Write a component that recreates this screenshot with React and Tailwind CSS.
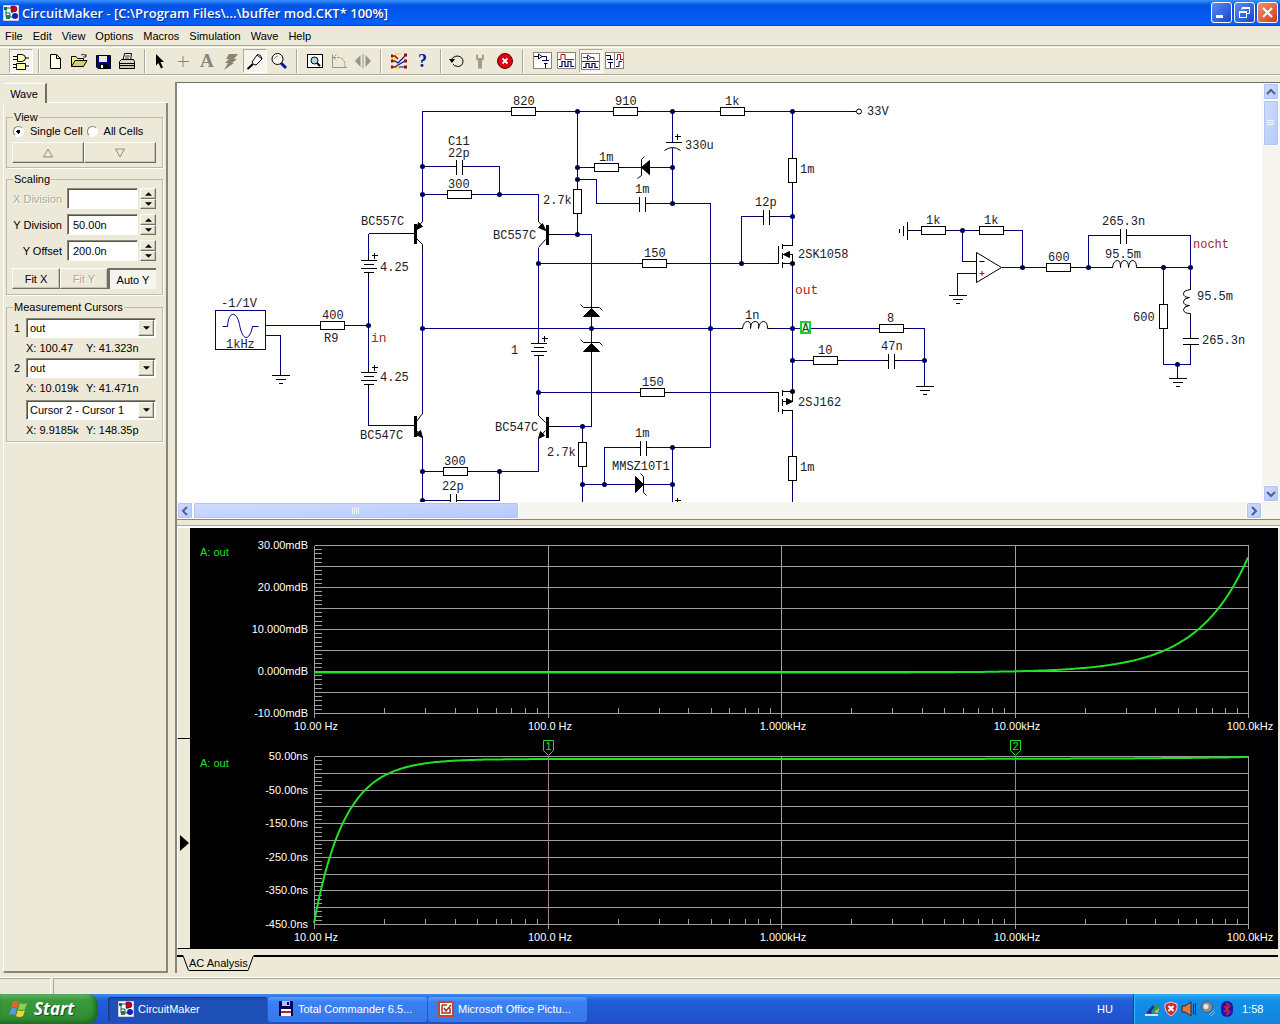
import { useState } from "react";

const WIRE = "#000080";

/* ---------- window chrome ---------- */

function AppIcon() {
  return (
    <svg width="16" height="16" viewBox="0 0 16 16" className="shrink-0">
      <rect width="16" height="16" fill="#fff" stroke="#b58cc0" />
      <path d="M1 3H9M3 3V12M3 8H7V12H13M9 3V8" stroke="#006060" fill="none" />
      <rect x="1" y="2" width="3" height="3" fill="#107040" />
      <path d="M8 1H11A2 2 0 0 1 11 7H8Z" fill="#c00030" stroke="#300" strokeWidth=".5" />
      <circle cx="12" cy="11" r="3" fill="#1020b0" />
      <rect x="3" y="10" width="4" height="4" fill="#208040" />
    </svg>
  );
}

function TitleBar() {
  return (
    <header className="flex h-[26px] items-center bg-linear-to-b from-[#3a93ff] via-[#0353e4] via-20% to-[#0560fb] border-b border-[#0344c0] pl-[3px] pr-[2px]">
      <AppIcon />
      <h1 className="ml-[3px] flex-1 whitespace-nowrap font-['Open_Sans',sans-serif] text-[13px] font-semibold leading-4 text-white [text-shadow:1px_1px_0_#0a2f8c]">
        CircuitMaker - [C:\Program Files\...\buffer mod.CKT* 100%]
      </h1>
      <div className="flex gap-[2px]">
        <button aria-label="Minimize" className="h-[21px] w-[21px] rounded-[3px] border border-white bg-linear-to-br from-[#5b8bf5] to-[#1546c8]">
          <svg width="19" height="19" viewBox="0 0 19 19"><path d="M4 13.500H11" stroke="#fff" strokeWidth="3" /></svg>
        </button>
        <button aria-label="Restore" className="h-[21px] w-[21px] rounded-[3px] border border-white bg-linear-to-br from-[#5b8bf5] to-[#1546c8]">
          <svg width="19" height="19" viewBox="0 0 19 19" fill="none" stroke="#fff">
            <path d="M7 7V4.500H14.500V10.500H12" />
            <path d="M7 5H15" strokeWidth="2" />
            <rect x="4.500" y="8.500" width="7" height="6" />
            <path d="M4 9H12" strokeWidth="2" />
          </svg>
        </button>
        <button aria-label="Close" className="h-[21px] w-[21px] rounded-[3px] border border-white bg-linear-to-br from-[#f09070] to-[#d03810]">
          <svg width="19" height="19" viewBox="0 0 19 19"><path d="M5 5L14 14M14 5L5 14" stroke="#fff" strokeWidth="2" /></svg>
        </button>
      </div>
    </header>
  );
}

function MenuBar() {
  const items = ["File", "Edit", "View", "Options", "Macros", "Simulation", "Wave", "Help"];
  return (
    <nav className="flex h-5 items-center gap-[10px] border-b border-[#aca899] pl-[5px]">
      {items.map((item) => (
        <button key={item} className="leading-4">{item}</button>
      ))}
    </nav>
  );
}

/* ---------- toolbar ---------- */

const icons = {
  gates: (
    <g fill="#ffffb0" stroke="#000">
      <path d="M2 5.500H6M2 8.500H6M14 7H18M2 13.500H6M2 16.500H6M14 15H18" />
      <path d="M6.500 3.500H11Q14.500 4 14.500 7Q14.500 10 11 10.500H6.500Z" />
      <path d="M5.500 12.500H14.500V18.500H5.500Z" />
    </g>
  ),
  new: <path d="M5.500 3.500H11.500L15.500 7.500V17.500H5.500ZM11.500 3.500V7.500H15.500" fill="#ffffe8" stroke="#000" />,
  open: (
    <g fill="#f8f080" stroke="#000">
      <path d="M2.500 15.500V5.500H7L8.500 7.500H14.500V10" />
      <path d="M2.500 15.500L6 9.500H18L14.500 15.500Z" fill="#d8d060" />
      <path d="M12 4Q15 2 17 5M17 3V6H14" fill="none" strokeWidth=".8" />
    </g>
  ),
  save: (
    <g>
      <path d="M3.500 4.500H17.500V17.500H5L3.500 16Z" fill="#000080" stroke="#000" />
      <rect x="6" y="5" width="8" height="6" fill="#ece9d8" />
      <rect x="7" y="13" width="8" height="4" fill="#000" />
      <rect x="8" y="14" width="2" height="3" fill="#fff" />
    </g>
  ),
  print: (
    <g fill="#fff" stroke="#000">
      <path d="M6 9.500L7.500 2.500H14.500L13.500 9.500Z" />
      <path d="M8 5H13M8 7H12" strokeWidth=".8" />
      <path d="M2.500 10.500L4.500 8.500H16.500L17.500 10.500V14.500H2.500Z" fill="#d8d4c0" />
      <path d="M2.500 14.500H17.500V17.500H2.500ZM3 12.500H17" fill="#c8c4b0" />
    </g>
  ),
  select: <path d="M7 3L15 11H11.500L14 16.500L12 17.500L9.500 12L7 14.500Z" />,
  wire: <path d="M10 5V16M5 10.500H16" stroke="#888575" fill="none" />,
  text: (
    <text x="3" y="16" fontSize="19" fontWeight="bold" fontFamily="Liberation Serif, serif" fill="#888575">A</text>
  ),
  bolt: <path d="M8 3H17L13 8H16L11 12H13L3 19L7 12H4L8 8H5Z" fill="#888575" />,
  probe: (
    <g fill="#fff" stroke="#000">
      <path d="M2.500 18L8 13" strokeWidth="2" />
      <path d="M7 11L12 4L17 8L11 14Q8 14 7 11Z" />
      <path d="M12 4Q15 2 17 8" fill="none" />
    </g>
  ),
  zoom: (
    <g fill="none">
      <path d="M12 12L17 17" stroke="#1010a0" strokeWidth="3" />
      <circle cx="8.500" cy="8" r="5.500" fill="#f6f6ea" stroke="#000" />
      <path d="M5.500 8Q6 5 9 5" stroke="#68a0a0" />
    </g>
  ),
  fit: (
    <g fill="#fff" stroke="#000">
      <rect x="2.500" y="3.500" width="15" height="13" />
      <path d="M12 12L15 15" strokeWidth="2" />
      <circle cx="9.500" cy="9.500" r="3.500" fill="#b0dada" />
    </g>
  ),
  rotate: (
    <g stroke="#98958a" fill="none">
      <path d="M3.500 3V16.500H18" />
      <path d="M4 6.500H10Q16 7 16 16M7.500 3.500L4.500 6.500L7.500 9.500" strokeDasharray="3 1" />
    </g>
  ),
  mirror: <path d="M7.500 4V16L2 10ZM12.500 4V16L18 10ZM9.500 3H10.500V17H9.500Z" fill="#98958a" />,
  run: (
    <g fill="none">
      <path d="M6 3H12M7 17H11M3 8H6" stroke="#f0e060" strokeWidth="2" />
      <path d="M3 5H6L9 8M3 10H6M3 16H6L9 14" stroke="#a00000" strokeWidth="1.500" />
      <path d="M6 10L9 12L16 5M9 14L16 10M10 16H16" stroke="#101090" strokeWidth="1.200" />
      <path d="M2 5H4M2 10H4M2 16H4M15 4H18M15 10H18M15 16H18" stroke="#901010" strokeWidth="3" />
    </g>
  ),
  help: <text x="5" y="16" fontSize="18" fontWeight="bold" fontFamily="Liberation Serif, serif" fill="#1010a8">?</text>,
  reset: (
    <g fill="none" stroke="#000">
      <path d="M4 9.500Q6 5 11 5Q16 6 16 10.500Q15.500 15.500 10.500 15.500Q7 15 6 13" />
      <path d="M2 8H8L5 12Z" fill="#000" stroke="none" />
    </g>
  ),
  wrench: <path d="M5 4L7 3V7H11V3L13 4V8L11 10V17L9 18L7 17V10L5 8Z" fill="#a09d8c" />,
  stop: (
    <g>
      <circle cx="10" cy="10" r="7.500" fill="#dc0010" stroke="#600" />
      <path d="M7.500 7.500L12.500 12.500M12.500 7.500L7.500 12.500" stroke="#fff" strokeWidth="1.800" />
    </g>
  ),
  viewCircuit: (
    <g fill="none" stroke="#000040">
      <rect x=".5" y="1.500" width="18" height="16" fill="#fff" stroke="#888575" />
      <path d="M1 5.500H6M9 5.500H13.500V9M5.500 3V8L9 5.500ZM9 9.500H16M11 12.500H14.500M12.500 13V17" />
    </g>
  ),
  viewWave: (
    <g fill="none">
      <rect x=".5" y="1.500" width="18" height="16" fill="#fff" stroke="#888575" />
      <path d="M1 8.500H4V3.500H8V8.500H17" stroke="#c00010" />
      <path d="M2 15.500H5V10.500H8V15.500H11V10.500H14V15.500H17" stroke="#000060" strokeWidth="1.200" />
    </g>
  ),
  viewSplitH: (
    <g fill="none">
      <rect x=".5" y="2.500" width="18" height="16" fill="#fff" stroke="#888575" />
      <path d="M2 6.500H6M10 6.500H13V9M6.500 4V9L10 6.500ZM1 10.500H18" stroke="#303050" />
      <path d="M2 16.500H5V12.500H8V16.500H11V12.500H14V16.500H17" stroke="#000060" strokeWidth="1.200" />
    </g>
  ),
  viewSplitV: (
    <g fill="none">
      <rect x=".5" y="1.500" width="18" height="16" fill="#fff" stroke="#888575" />
      <path d="M9.500 2V17" stroke="#888575" />
      <path d="M1 4.500H5.500V8M2 8.500H8M3 11.500H8M5.500 12V17" stroke="#000040" />
      <path d="M11 8.500H12.500V3.500H15.500V8.500H18" stroke="#c00010" />
      <path d="M11 15.500H14V10.500H17" stroke="#000060" />
    </g>
  ),
};

const toolGroups = [
  { id: "parts", space: "ml-[9px]", tools: ["gates"] },
  { id: "file", space: "ml-[3px]", tools: ["new", "open", "save", "print"] },
  { id: "edit", space: "ml-px", tools: ["select", "wire", "text", "bolt", "probe", "zoom"] },
  { id: "view", space: "ml-[5px]", tools: ["fit", "rotate", "mirror"] },
  { id: "sim", space: "ml-[5px]", tools: ["run", "help"] },
  { id: "control", space: "ml-[3px]", tools: ["reset", "wrench", "stop"] },
  { id: "windows", space: "ml-[7px]", tools: ["viewCircuit", "viewWave", "viewSplitH", "viewSplitV"] },
];
const pressed = ["gates", "probe", "viewSplitH"];

function Toolbar() {
  return (
    <div className="mt-px flex h-7 items-center border-t border-b border-t-white border-b-[#aca899] shadow-[0_1px_0_#fff]">
      {toolGroups.map((group, i) => (
        <div key={group.id} className="flex items-center">
          {i > 0 && <span className="ml-[5px] h-6 w-[2px] border-l border-r border-l-[#aca899] border-r-white" />}
          <div className={"flex " + group.space}>
            {group.tools.map((tool) => (
              <button
                key={tool}
                aria-label={tool}
                className={
                  "flex h-6 w-6 items-center justify-center " +
                  (pressed.includes(tool) ? "border border-[#aca899] border-b-white border-r-white bg-[#f6f4ec]" : "")
                }
              >
                <svg width="20" height="20" viewBox="0 0 20 20" className="shrink-0 overflow-visible">{icons[tool]}</svg>
              </button>
            ))}
          </div>
        </div>
      ))}
    </div>
  );
}

/* ---------- wave panel ---------- */

const raised = "border border-white border-b-[#716f64] border-r-[#716f64] shadow-[inset_-1px_-1px_0_#c5c2b0]";
const sunken = "border border-[#8a8778] border-b-white border-r-white bg-white shadow-[inset_1px_1px_0_#55534a]";

function Group({ title, className, children }) {
  return (
    <fieldset className={"min-w-0 border border-[#bdbaa8] pl-[5px] pr-[6px] shadow-[1px_1px_0_#fff] " + className}>
      <legend className="ml-px h-[14px] px-px leading-[14px]">{title}</legend>
      {children}
    </fieldset>
  );
}

function Triangle({ down, size = 7, hollow }) {
  return (
    <svg width={size} height={hollow ? 10 : 4} viewBox={hollow ? "0 0 12 10" : "0 0 8 4"} className="mx-auto">
      {hollow ? (
        <path d={down ? "M1.500 1H10.500L6 9Z" : "M1.500 9H10.500L6 1Z"} fill="none" stroke="#8f8c7c" />
      ) : (
        <path d={down ? "M0 0H8L4 4Z" : "M0 4H8L4 0Z"} />
      )}
    </svg>
  );
}

function Field({ id, label, value, disabled }) {
  return (
    <div className="mb-[5px] flex h-[21px] items-center">
      <label htmlFor={id} className={"w-[50px] whitespace-nowrap text-right " + (disabled ? "text-[#aca899] [text-shadow:1px_1px_0_#fff]" : "")}>
        {label}
      </label>
      <input id={id} defaultValue={value} disabled={disabled} className={"ml-[5px] h-[21px] w-0 flex-1 pl-[5px] " + sunken} />
      <div className="ml-[2px] flex w-4 flex-col">
        <button aria-label={label + " up"} className={"h-[11px] " + raised}><Triangle /></button>
        <button aria-label={label + " down"} className={"h-[10px] " + raised}><Triangle down /></button>
      </div>
    </div>
  );
}

function Picker({ id, label, options }) {
  return (
    <div className="flex h-5 items-center">
      <label htmlFor={id} className="w-[14px] pl-[2px]">{label}</label>
      <div className={"flex h-5 flex-1 p-px " + sunken}>
        <select id={id} aria-label={label || "Difference"} className="w-0 flex-1 appearance-none pl-[2px] outline-none">
          {options.map((o) => <option key={o}>{o}</option>)}
        </select>
        <span className={"flex w-4 items-center bg-[#ece9d8] " + raised}><Triangle down /></span>
      </div>
    </div>
  );
}

function Reading({ x, y }) {
  return (
    <div className="flex h-5 items-center pl-[14px]">
      <span className="w-[60px]">X: {x}</span>
      <span>Y: {y}</span>
    </div>
  );
}

function WavePanel() {
  const [cell, setCell] = useState("single");
  return (
    <aside className="flex w-[165px] shrink-0 flex-col">
      <div className="flex h-5">
        <button className="w-[44px] border-r-2 border-[#716f64] border-t border-t-white leading-4">Wave</button>
        <span className="flex-1 border-b border-white" />
      </div>
      <div className="flex-1 border-b-2 border-l border-r-2 border-b-[#8a8778] border-l-white border-r-[#8a8778] pl-[2px] pr-[3px] pt-[7px]">
        <Group title="View" className="h-[58px]">
          <div className="flex h-[14px] items-center gap-[3px]">
            <label className="flex items-center gap-[6px] whitespace-nowrap">
              <input type="radio" name="cell" checked={cell === "single"} onChange={() => setCell("single")}
                className="ml-px h-[11px] w-[11px] appearance-none rounded-full border border-[#8a8778] border-b-white border-r-white bg-white checked:bg-[radial-gradient(circle,#000_0_2px,#fff_2px)]" />
              Single Cell
            </label>
            <label className="flex items-center gap-[6px] whitespace-nowrap">
              <input type="radio" name="cell" checked={cell === "all"} onChange={() => setCell("all")}
                className="ml-px h-[11px] w-[11px] appearance-none rounded-full border border-[#8a8778] border-b-white border-r-white bg-white checked:bg-[radial-gradient(circle,#000_0_2px,#fff_2px)]" />
              All Cells
            </label>
          </div>
          <div className="mt-1 flex h-[21px]">
            <button aria-label="Previous cell" className={"flex flex-1 items-center " + raised}><Triangle size={12} hollow /></button>
            <button aria-label="Next cell" className={"flex flex-1 items-center " + raised}><Triangle size={12} hollow down /></button>
          </div>
        </Group>
        <Group title="Scaling" className="mt-1 h-[123px]">
          <div className="h-[2px]" />
          <Field id="xdiv" label="X Division" value="" disabled />
          <Field id="ydiv" label="Y Division" value="50.00n" />
          <Field id="yoff" label="Y Offset" value="200.0n" />
          <div className="mt-[7px] flex h-[21px]">
            <button className={"flex-1 " + raised}>Fit X</button>
            <button disabled className={"flex-1 text-[#aca899] [text-shadow:1px_1px_0_#fff] " + raised}>Fit Y</button>
            <button className="flex-1 border-l-2 border-t-2 border-[#716f64] bg-[#f5f4ee]">Auto Y</button>
          </div>
        </Group>
        <Group title="Measurement Cursors" className="mt-[5px] h-[142px]">
          <div className="h-1" />
          <Picker id="c1" label="1" options={["out", "in"]} />
          <Reading x="100.47" y="41.323n" />
          <Picker id="c2" label="2" options={["out", "in"]} />
          <Reading x="10.019k" y="41.471n" />
          <div className="h-[2px]" />
          <Picker id="diff" label="" options={["Cursor 2 - Cursor 1"]} />
          <Reading x="9.9185k" y="148.35p" />
        </Group>
      </div>
    </aside>
  );
}

/* ---------- schematic ---------- */

const wires = [
  // input and left branch
  "M265 325H368M265 335H280V375M368 233V325V425H413M368 233H413",
  "M422 221V111H850M422 166H499V194M422 194H538V221M422 244V413M422 437V500H499V471M422 471H538V438",
  "M422 328H742M767 328H924V386M538 247V343M538 355V415M538 263H778M538 392H778",
  // middle branches
  "M577 111V234M577 167H672M577 179H596V203H710V447H604V484M672 111V203M548 234H591V426H548M582 426V502M582 484H672M672 447V502",
  // output stage
  "M792 111V245M741 263V216H792M792 263V391M792 360H924M792 410V502",
  // notch filter
  "M907 230H1022V267M962 230V261H976M976 273H957V295M1001 267H1112M1136 267H1190V289M1088 267V235H1190V267M1163 267V364H1190V344M1190 313V338M1177 364V378",
].join("");

const nodes = [
  [422, 166], [422, 194], [499, 194], [368, 325], [422, 328], [422, 471], [499, 471], [422, 500],
  [577, 111], [577, 167], [577, 179], [577, 234], [672, 111], [672, 167], [672, 203], [792, 111],
  [792, 216], [741, 263], [538, 263], [538, 392], [591, 328], [710, 328], [792, 328], [792, 360],
  [924, 360], [582, 426], [582, 484], [604, 484], [672, 447], [672, 484],
  [962, 230], [1022, 267], [1088, 267], [1163, 267], [1190, 267], [1177, 364],
];

const resistorsH = [
  [447, 194], [443, 471], [320, 325], [511, 111], [613, 111], [720, 111], [594, 167], [642, 263],
  [640, 392], [879, 328], [813, 360], [921, 230], [979, 230], [1046, 267],
];
const resistorsV = [[577, 189], [582, 442], [792, 158], [792, 456], [1163, 304]];
const capacitors = [
  [456, 166], [450, 500], [639, 203], [763, 216], [640, 447], [888, 360], [1120, 235],
];
const batteries = [[368, 260], [368, 372], [538, 343]];
const grounds = [[280, 375], [924, 386], [957, 295], [1177, 378]];

const labels = [
  ["820", 513, 105], ["910", 615, 105], ["1k", 725, 105], ["33V", 867, 115],
  ["C11", 448, 145], ["22p", 448, 157], ["300", 448, 188], ["330u", 685, 149],
  ["1m", 599, 161], ["1m", 635, 193], ["2.7k", 543, 204], ["1m", 800, 173], ["12p", 755, 206],
  ["BC557C", 361, 225], ["BC557C", 493, 239], ["4.25", 380, 271], ["150", 644, 257],
  ["2SK1058", 798, 258], ["-1/1V", 221, 307], ["1kHz", 226, 348], ["400", 322, 319], ["R9", 324, 342],
  ["4.25", 380, 381], ["BC547C", 360, 439], ["BC547C", 495, 431], ["300", 444, 465], ["22p", 442, 490],
  ["1", 511, 354], ["1n", 745, 319], ["8", 887, 322], ["10", 818, 354], ["47n", 881, 350],
  ["150", 642, 386], ["2SJ162", 798, 406], ["2.7k", 547, 456], ["1m", 635, 437],
  ["MMSZ10T1", 612, 470], ["1m", 800, 471],
  ["1k", 926, 224], ["1k", 984, 224], ["600", 1048, 261], ["265.3n", 1102, 225], ["95.5m", 1105, 258],
  ["95.5m", 1197, 300], ["600", 1133, 321], ["265.3n", 1202, 344],
];

function Schematic() {
  return (
    <svg width="1084" height="419" viewBox="177 83 1084 419" className="block shrink-0">
      <g transform="translate(.5 .5)" fill="none" stroke="#000" shapeRendering="crispEdges">
        <path d={wires} stroke={WIRE} />
        {resistorsH.map(([x, y]) => (
          <g key={`h${x}-${y}`}>
            <path d={`M${x - 5} ${y}h34`} />
            <rect x={x} y={y - 4} width="24" height="8" fill="#fff" />
          </g>
        ))}
        {resistorsV.map(([x, y]) => (
          <g key={`v${x}-${y}`}>
            <path d={`M${x} ${y - 5}v34`} />
            <rect x={x - 4} y={y} width="8" height="24" fill="#fff" />
          </g>
        ))}
        {capacitors.map(([x, y]) => (
          <g key={`c${x}-${y}`}>
            <path d={`M${x - 5} ${y}h16`} />
            <rect x={x} y={y - 7} width="6" height="15" fill="#fff" stroke="none" />
            <path d={`M${x} ${y - 7}v15m6 -15v15`} />
          </g>
        ))}
        {batteries.map(([x, y]) => (
          <g key={`b${x}-${y}`}>
            <rect x={x - 2} y={y} width="4" height="12" fill="#fff" stroke="none" />
            <path d={`M${x - 8} ${y}h16m-13 4h10m-13 4h16m-13 4h10M${x} ${y - 5}v5M${x} ${y + 12}v5M${x + 3} ${y - 5}h6m-3 -3v6`} />
          </g>
        ))}
        {grounds.map(([x, y]) => (
          <path key={`g${x}-${y}`} d={`M${x - 9} ${y}h18m-14 4h10m-7 4h4M${x} ${y}v-4`} />
        ))}
        {/* polarised capacitor */}
        <rect x="668" y="142" width="8" height="5" fill="#fff" stroke="none" />
        <path d="M665 142H681M674 136H680M677 133V139M674 500H680M677 497V502" />
        {/* horizontal capacitor of the notch */}
        <path d="M1182 338H1198M1182 344H1198M1190 333V338M1190 344V349" />
        {/* sideways ground */}
        <path d="M907 221V239M903 225V235M899 228V232M907 230H914" />
        {/* FET channels and gates */}
        <path d="M778 245V263H768M782 243V248M782 252V258M782 261V267M782 245H792V238M782 254H792V263H782" />
        <path d="M768 392H778V411M782 389V395M782 398V405M782 408V413M782 391H792V401H782M782 410H792V418" />
        <rect x="215" y="310" width="50" height="39" stroke={WIRE} />
        <rect x="413" y="223" width="3" height="20" fill="#000" stroke="none" />
        <rect x="413" y="415" width="3" height="21" fill="#000" stroke="none" />
        <rect x="545" y="224" width="3" height="20" fill="#000" stroke="none" />
        <rect x="545" y="416" width="3" height="21" fill="#000" stroke="none" />
        <path d="M400 233H413M400 425H413M548 234H560M548 426H560" />
      </g>

      <g transform="translate(.5 .5)" fill="none" stroke="#000">
        <path d="M222 326H227C228 310 236 310 239 324C242 341 249 341 252 326H258" stroke={WIRE} />
        {/* transistor legs */}
        <path d="M416 228L422 221M416 238L422 244V250M416 421L422 413M416 430L422 437M545 229L538 221V216M545 239L538 247M545 422L538 415V410M545 430L538 438" />
        <path d="M416 229L418 222L422 226ZM422 437L415 434L420 430ZM545 230L538 227L542 223ZM538 438L540 431L544 435Z" fill="#000" />
        <path d="M783 254L789 251V257ZM792 401L786 398V404Z" fill="#000" />
        {/* zeners */}
        <path d="M641 167L649 160V174ZM591 308L599 316H583ZM591 343L599 351H583ZM643 484L635 476V492Z" fill="#000" />
        <path d="M644 156L641 159V175L637 178M580 304L583 307H599L602 310M580 339L583 342H599L602 345M640 473L643 476V492L646 495" />
        <path d="M664 150Q672 144 680 150" />
        {/* inductors */}
        <path d="M736 328H742Q743 321 747 321Q751 321 750 328Q750 321 755 321Q759 321 758 328Q759 321 763 321Q767 321 767 328H773" />
        <path d="M1106 267H1112Q1113 260 1117 260Q1120 260 1120 267Q1120 260 1124 260Q1128 260 1128 267Q1129 260 1132 260Q1136 260 1136 267H1142" />
        <path d="M1190 283V289Q1183 290 1183 293Q1183 297 1189 297Q1183 298 1183 301Q1183 305 1189 305Q1183 306 1183 309Q1183 313 1190 313V319" />
        <path d="M976 252V282L1001 267Z" fill="#fff" />
        <path d="M979 261H984" />
        <path d="M979 273H984M981.500 270.500V275.500" stroke="#c00020" />
        <path d="M850 111H856" />
        <circle cx="858.500" cy="111" r="2.500" fill="#fff" />
      </g>

      {nodes.map(([x, y]) => (
        <circle key={`n${x}-${y}`} cx={x + 0.5} cy={y + 0.5} r="2.500" fill="#000050" />
      ))}
      <circle cx="792.500" cy="263.500" r="2.500" />
      <circle cx="792.500" cy="391.500" r="2.500" />

      <rect x="801" y="322" width="9" height="11" fill="#e4ffe4" stroke="#20d030" strokeWidth="2" />
      <g className="font-['Liberation_Mono',monospace] text-[12px]" fill="#202028">
        <text x="802" y="332" fill="#105010">A</text>
        {labels.map(([t, x, y]) => (
          <text key={`${t}-${x}-${y}`} x={x} y={y}>{t}</text>
        ))}
        <g fill="#a02830">
          <text x="1193" y="248">nocht</text>
          <text x="371" y="342" className="text-[13px]">in</text>
          <text x="795" y="294" className="text-[13px]">out</text>
        </g>
      </g>
    </svg>
  );
}

const scrollPart = "flex items-center justify-center rounded-[2px] border border-white bg-linear-to-br from-[#cfdcfd] to-[#b5cafa] shadow-[inset_0_0_0_1px_#b0c4f4]";

function ScrollButton({ label, d }) {
  return (
    <button aria-label={label} className={"h-[17px] w-4 shrink-0 " + scrollPart}>
      <svg width="10" height="10" viewBox="0 0 10 10"><path d={d} fill="none" stroke="#4d6185" strokeWidth="2" /></svg>
    </button>
  );
}

function SchematicPane() {
  return (
    <div className="border-b border-t border-b-[#8a8778] border-t-[#716f64] bg-white">
      <div className="flex">
        <div className="min-w-0 flex-1 overflow-hidden"><Schematic /></div>
        <div className="flex w-[18px] shrink-0 flex-col items-center bg-[#f5f4ee]">
          <ScrollButton label="Scroll up" d="M1 7L5 3L9 7" />
          <div className={"h-[46px] w-4 " + scrollPart}>
            <svg width="8" height="8"><path d="M0 1.500H7M0 3.500H7M0 5.500H7" stroke="#eef4fe" /></svg>
          </div>
          <span className="flex-1" />
          <ScrollButton label="Scroll down" d="M1 3L5 7L9 3" />
        </div>
      </div>
      <div className="flex h-[17px] bg-[#f5f4ee] pr-[18px]">
        <ScrollButton label="Scroll left" d="M7 1L3 5L7 9" />
        <div className={"h-[17px] w-[30%] " + scrollPart}>
          <svg width="9" height="8"><path d="M1.500 0V7M3.500 0V7M5.500 0V7M7.500 0V7" stroke="#eef4fe" /></svg>
        </div>
        <span className="flex-1" />
        <ScrollButton label="Scroll right" d="M3 1L7 5L3 9" />
      </div>
    </div>
  );
}

/* ---------- plots ---------- */

const X0 = 314;
const DECADE = 233.5;
const HEIGHT = 168;
const decades = [0, 1, 2, 3, 4];
const freqLabels = ["10.00 Hz", "100.0 Hz", "1.000kHz", "10.00kHz", "100.0kHz"];

function trace(fn) {
  const points = [];
  for (let x = X0; x <= X0 + 4 * DECADE; x += 2) {
    points.push(`${x},${fn(Math.pow(10, (x - X0) / DECADE)).toFixed(1)}`);
  }
  return points.join(" ");
}

// f is in units of 10 Hz
const gain = trace((f) => 672.5 - 115 * Math.pow(f / 10000, 2));
const delay = trace((f) => Math.max(757, 759 + 164 / Math.pow(f, 3.3) - 2 * (f / 10000)));

function Plot({ top, rows, yLabels, points }) {
  const x = (d) => Math.round(X0 + d * DECADE);
  const minorY = Array.from({ length: 41 }, (_, i) => top + Math.round((i * HEIGHT) / 40));
  return (
    <g>
      <g transform="translate(.5 .5)" stroke="#a0a0a0" shapeRendering="crispEdges">
        {Array.from({ length: rows + 1 }, (_, i) => (
          <path key={i} d={`M${X0} ${top + Math.round((i * HEIGHT) / rows)}H${x(4)}`} />
        ))}
        {decades.map((d) => <path key={d} d={`M${x(d)} ${top}V${top + HEIGHT + 4}`} />)}
        {minorY.map((y) => <path key={y} d={`M${X0} ${y}h7`} />)}
        {decades.slice(0, 4).map((d) =>
          [2, 3, 4, 5, 6, 7, 8, 9].map((n) => (
            <path key={`${d}-${n}`} d={`M${x(d + Math.log10(n))} ${top + HEIGHT}v-6`} />
          ))
        )}
      </g>
      <polyline points={points} fill="none" stroke="#20e028" strokeWidth="2" />
      <g fill="#fff">
        {yLabels.map((t, i) => (
          <text key={t} x="308" y={top + 4 + Math.round((i * HEIGHT) / (yLabels.length - 1))} textAnchor="end">{t}</text>
        ))}
        {freqLabels.map((t, i) => (
          <text key={t} x={x(i) + 2} y={top + HEIGHT + 17} textAnchor="middle">{t}</text>
        ))}
      </g>
      <text x="200" y={top + 11} fill="#20e028">A: out</text>
    </g>
  );
}

function Cursor({ x, label }) {
  return (
    <g>
      <path d={`M${x}.5 756V924`} stroke="#9c809c" shapeRendering="crispEdges" />
      <path d={`M${x - 4.5} 740.500h10v10l-5 5l-5 -5z`} fill="#000" stroke="#20e028" />
      <text x={x + 0.5} y="750" textAnchor="middle" fill="#20e028">{label}</text>
    </g>
  );
}

function Plots() {
  return (
    <div className="flex">
      <div className="flex w-[13px] shrink-0 flex-col">
        <div className="h-1/2 border-b border-black border-l border-l-white" />
        <div className="flex h-1/2 items-center justify-end border-b border-black border-l border-l-white pr-px">
          <svg width="9" height="16" viewBox="0 0 9 16"><path d="M0 0L9 8L0 16Z" /></svg>
        </div>
      </div>
      <svg viewBox="190 528 1088 421" className="block w-0 flex-1 bg-black text-[11px]">
        <Plot
          top={545}
          rows={8}
          yLabels={["30.00mdB", "20.00mdB", "10.000mdB", "0.000mdB", "-10.00mdB"]}
          points={gain}
        />
        <Plot
          top={756}
          rows={10}
          yLabels={["50.00ns", "-50.00ns", "-150.0ns", "-250.0ns", "-350.0ns", "-450.0ns"]}
          points={delay}
        />
        <Cursor x={548} label="1" />
        <Cursor x={1015} label="2" />
      </svg>
      <span className="w-[2px]" />
    </div>
  );
}

function AnalysisTabs() {
  return (
    <div className="mt-[6px] flex h-[18px] items-start">
      <span className="w-[6px] border-t-2 border-black" />
      <svg width="6" height="16" className="shrink-0"><path d="M0 .5L5.500 15.500" stroke="#000" /></svg>
      <button className="h-4 border-b border-black leading-4">AC Analysis</button>
      <svg width="6" height="16" className="shrink-0"><path d="M0 15.500L5.500 .5" stroke="#000" /></svg>
      <span className="mr-[2px] flex-1 border-t-2 border-black" />
    </div>
  );
}

/* ---------- taskbar ---------- */

function TaskButton({ icon, label, active }) {
  return (
    <button
      className={
        "flex h-[25px] w-[159px] items-center gap-1 rounded-[3px] pl-[10px] text-white " +
        (active ? "bg-[#1e50b8] shadow-[inset_1px_1px_2px_#123478]" : "bg-linear-to-b from-[#5a9cff] via-[#3a80f4] via-20% to-[#3878ea]")
      }
    >
      {icon}
      {label}
    </button>
  );
}

function TaskBar() {
  return (
    <footer className="flex h-[30px] items-stretch bg-linear-to-b from-[#3f8cf3] via-[#245edb] via-20% to-[#1f50c8]">
      <button className="flex w-[98px] items-center gap-[5px] rounded-r-[10px] bg-linear-to-b from-[#6ab56a] via-[#3a9a3c] via-20% to-[#2f8a30] pl-[9px] font-['Open_Sans',sans-serif] text-[17px] font-bold italic text-white shadow-[inset_-3px_-2px_5px_#1c6420] [text-shadow:1px_1px_1px_#1a4a1a]">
        <svg width="20" height="20" viewBox="0 0 20 20" className="shrink-0">
          <path d="M4 3Q7 1 10 3L8 9Q5 7 2 9Z" fill="#f0602c" />
          <path d="M11 4Q14 6 18 4L16 10Q12 12 9 10Z" fill="#8cd050" />
          <path d="M2 10Q5 8 8 10L6 16Q3 14 0 16Z" fill="#5c94f0" />
          <path d="M9 11Q12 13 16 11L14 17Q10 19 7 17Z" fill="#fcd040" />
        </svg>
        Start
      </button>
      <div className="ml-[10px] flex flex-1 items-center gap-px">
        <TaskButton label="CircuitMaker" icon={<AppIcon />} active />
        <TaskButton
          label="Total Commander 6.5..."
          icon={
            <svg width="16" height="16" className="shrink-0">
              <path d="M1 0H15V15H1Z" fill="#000060" />
              <path d="M4 0H12V5H4Z" fill="#b8c4e0" />
              <path d="M9 1H11V4H9Z" fill="#000060" />
              <path d="M3 8H13V15H3Z" fill="#fff" />
              <path d="M3 10H13V12H3Z" fill="#c02020" />
            </svg>
          }
        />
        <TaskButton
          label="Microsoft Office Pictu..."
          icon={
            <svg width="16" height="16" className="shrink-0" fill="none">
              <rect x="1" y="1" width="14" height="14" fill="#fff" stroke="#c04830" strokeWidth="2" />
              <path d="M4 4V12H12V7M6 7L8 10L13 4M4 4H9" stroke="#a03828" strokeWidth="1.500" />
            </svg>
          }
        />
      </div>
      <span className="mr-5 self-center text-white">HU</span>
      <div className="flex w-[147px] items-center gap-[2px] border-l border-[#0a3ea0] bg-linear-to-b from-[#2cb0f8] via-[#1290e9] via-20% to-[#1184dc] pl-[11px] text-white shadow-[inset_1px_0_0_#3cb8f8]">
        <svg width="16" height="16" className="shrink-0">
          <path d="M0 13H13V15H0Z" fill="#dde" />
          <path d="M1 12L8 4L10 7L6 13Z" fill="#1830a0" />
          <path d="M6 11L12 2L14 4L9 12Z" fill="#20a040" />
          <path d="M9 11L14 7L13 12Z" fill="#f0b020" />
        </svg>
        <svg width="16" height="16" className="shrink-0">
          <path d="M8 1L14 3Q15 11 8 15Q1 11 2 3Z" fill="#d02830" stroke="#f4d0d0" />
          <path d="M5.500 5L10.500 10M10.500 5L5.500 10" stroke="#fff" strokeWidth="2" />
        </svg>
        <svg width="17" height="16" className="shrink-0">
          <path d="M1 5H4L10 1V15L4 11H1Z" fill="#e07840" stroke="#402010" />
          <path d="M12.500 3V13M14.500 2V14" stroke="#203050" />
        </svg>
        <svg width="16" height="16" className="shrink-0">
          <circle cx="7" cy="6" r="5.500" fill="#8a9098" stroke="#50565c" />
          <circle cx="6" cy="5.500" r="2.500" fill="#e4e8ec" />
          <path d="M9 14L14 9M11 15L15 11" stroke="#80c0f0" />
        </svg>
        <svg width="16" height="16" className="ml-px shrink-0" fill="none">
          <rect x="2" y="0" width="12" height="16" rx="6" fill="#1818b0" />
          <path d="M5 5L11 11L8 13.500V2.500L11 5L5 11" stroke="#e02030" strokeWidth="1.300" />
        </svg>
        <span className="ml-[5px]">1:58</span>
      </div>
    </footer>
  );
}

export default function App() {
  return (
    <div className="flex min-h-screen flex-col bg-[#ece9d8] font-['Liberation_Sans',Arial,sans-serif] text-[11px] leading-4 text-black">
      <TitleBar />
      <MenuBar />
      <Toolbar />
      <main className="mt-[7px] flex flex-1">
        <div className="flex pl-[3px] pt-px"><WavePanel /></div>
        <section className="ml-[7px] flex min-w-0 flex-1 flex-col border-l-2 border-[#8a8778]">
          <SchematicPane />
          <div className="mt-[5px] h-[3px] border-t border-[#aca899] bg-white" />
          <Plots />
          <AnalysisTabs />
        </section>
      </main>
      <div className="mt-1 flex h-[17px] border-t border-white">
        <div className="w-[51px] border-t border-r border-t-[#aca899] border-r-white" />
        <div className="ml-[2px] flex-1 border-l border-t border-[#aca899]" />
      </div>
      <TaskBar />
    </div>
  );
}
